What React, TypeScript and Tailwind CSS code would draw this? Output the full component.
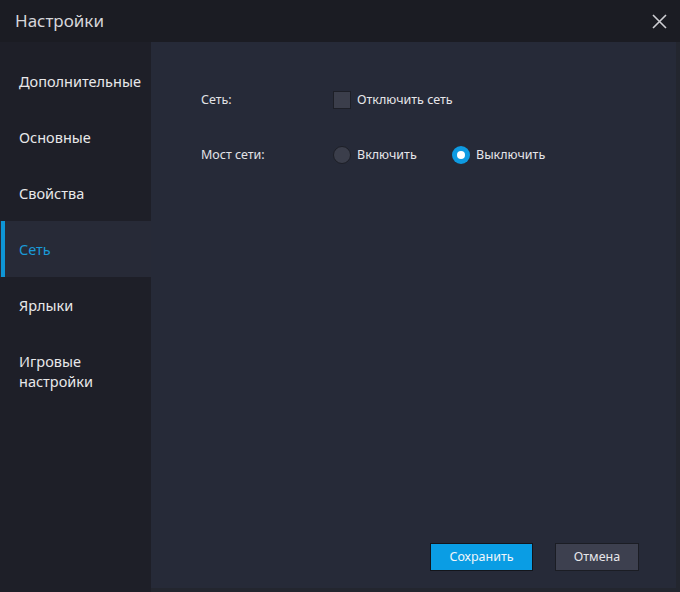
import React, { useState } from 'react';

const items = ['Дополнительные', 'Основные', 'Свойства', 'Сеть', 'Ярлыки', 'Игровые настройки'];

export default function App() {
    const [active, setActive] = useState('Сеть');
    const [bridge, setBridge] = useState('off');
    const [noNet, setNoNet] = useState(false);

    return (
        <div className="w-[680px] h-[592px] flex flex-col bg-[#1b1c23] text-[#e4e4e6] overflow-hidden" style={{ fontFamily: '"Noto Sans", "Open Sans", sans-serif' }}>
            <div className="h-[42px] shrink-0 flex items-center justify-between pl-[15px] pr-[13px]">
                <span className="text-[17px] text-[#d6d6da]">Настройки</span>
                <button className="w-[16px] h-[16px] flex items-center justify-center">
                    <svg width="15" height="15" viewBox="0 0 15 15" fill="none" stroke="#cfcfd4" strokeWidth="1.6">
                        <path d="M1 1L14 14M14 1L1 14" />
                    </svg>
                </button>
            </div>
            <div className="flex flex-1 min-h-0">
                <nav className="w-[151px] shrink-0 bg-[#1e1f28] pt-[11px] flex flex-col">
                    {items.map((it) => {
                        const on = it === active;
                        return (
                            <button
                                key={it}
                                onClick={() => setActive(it)}
                                className={`relative text-left pl-[19px] pr-2 text-[14.5px] leading-[20px] ${it.includes(' ') ? 'pt-[18px] pb-[8px] w-[120px]' : 'h-[56px]'} ${on ? 'bg-[#272a37] text-[#1a9ad8]' : 'text-[#e8e8ea]'}`}
                            >
                                {on && <span className="absolute left-[1px] top-0 bottom-0 w-[4px] bg-[#0e95d5]" />}
                                {it}
                            </button>
                        );
                    })}
                </nav>
                <main className="flex-1 bg-[#262a38] flex flex-col border-r-[4px] border-b-[4px] border-[#23262f] text-[12.5px]">
                    <div className="pl-[50px] pt-[49px] flex flex-col gap-[37px]">
                        <div className="flex items-center h-[18px]">
                            <span className="w-[132px] text-[#e2e2e6]">Сеть:</span>
                            <label className="flex items-center gap-[6px] cursor-pointer" onClick={() => setNoNet(!noNet)}>
                                <span className="w-[18px] h-[18px] bg-[#3b3e4b] border border-[#1d1f27] flex items-center justify-center">
                                    {noNet && <span className="w-[9px] h-[9px] bg-[#0e95d5]" />}
                                </span>
                                <span className="text-[#e6e6ea]">Отключить сеть</span>
                            </label>
                        </div>
                        <div className="flex items-center h-[18px]">
                            <span className="w-[132px] text-[#e2e2e6]">Мост сети:</span>
                            <label className="flex items-center gap-[6px] w-[119px] cursor-pointer" onClick={() => setBridge('on')}>
                                <Radio on={bridge === 'on'} />
                                <span className="text-[#e6e6ea]">Включить</span>
                            </label>
                            <label className="flex items-center gap-[6px] cursor-pointer" onClick={() => setBridge('off')}>
                                <Radio on={bridge === 'off'} />
                                <span className="text-[#e6e6ea]">Выключить</span>
                            </label>
                        </div>
                    </div>
                    <div className="mt-auto flex justify-end gap-[22px] pr-[37px] pb-[17px]">
                        <button className="w-[103px] h-[28px] bg-[#0a9de4] border border-[#13151b] text-[#f1f6fa]">Сохранить</button>
                        <button className="w-[84px] h-[28px] bg-[#3d404f] border border-[#1b1d24] text-[#e6e6ea]">Отмена</button>
                    </div>
                </main>
            </div>
        </div>
    );
}

function Radio({ on }: { on: boolean }) {
    return (
        <span className={`w-[18px] h-[18px] rounded-full flex items-center justify-center ${on ? 'bg-[#0e9be2]' : 'bg-[#3b3e4b] border border-[#1d1f27]'}`}>
            {on && <span className="w-[8px] h-[8px] rounded-full bg-white" />}
        </span>
    );
}
